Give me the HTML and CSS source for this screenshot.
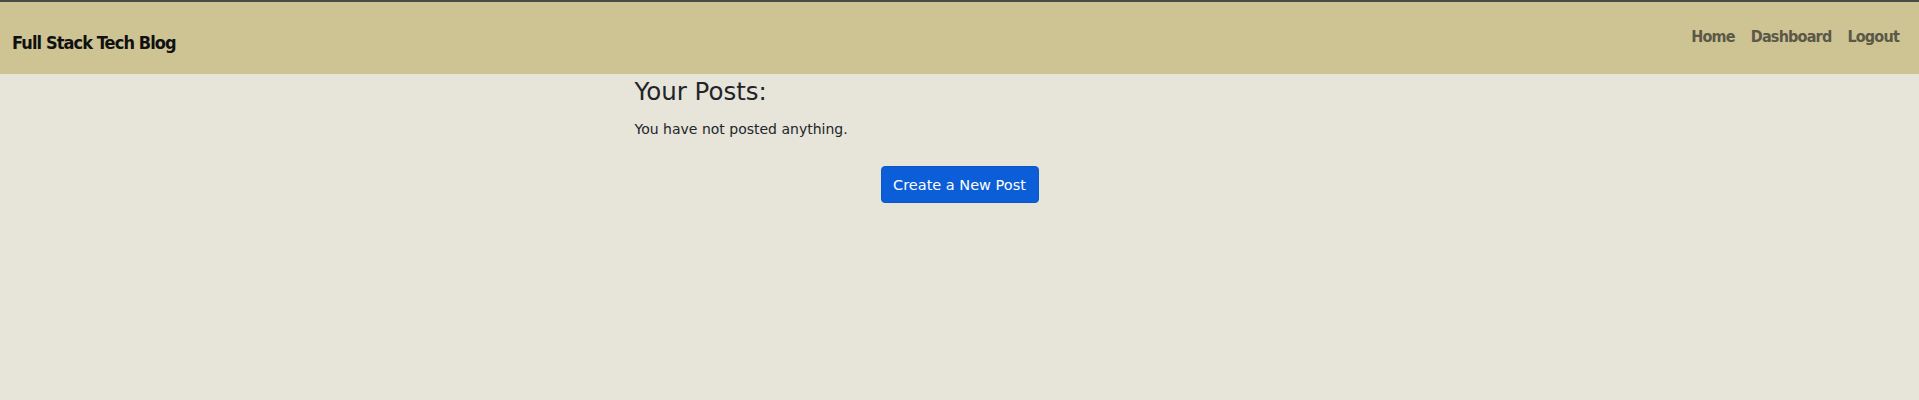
FILE: index.html
```html
<!DOCTYPE html>
<html>
<head>
<meta charset="utf-8">
<link rel="stylesheet" href="styles.css">
</head>
<body>
<header class="site-header">
  <h1 class="brand">Full Stack Tech Blog</h1>
  <nav class="nav">
    <a class="nav-link" href="#">Home</a>
    <a class="nav-link" href="#">Dashboard</a>
    <a class="nav-link" href="#">Logout</a>
  </nav>
</header>
<main class="main">
  <h2 class="title">Your Posts:</h2>
  <p class="empty">You have not posted anything.</p>
  <div class="actions">
    <button class="btn">Create a New Post</button>
  </div>
</main>
</body>
</html>
```
FILE: styles.css
```css
html, body {
  margin: 0;
  padding: 0;
}
body {
  background: #e7e4d9;
  font-family: "DejaVu Sans", "Open Sans", sans-serif;
  color: #212529;
  height: 400px;
}
.site-header {
  border-top: 2px solid #4a4a48;
  background: #cdc393;
  height: 72px;
  display: flex;
  align-items: center;
  justify-content: space-between;
  padding: 0 20px 0 12px;
}
.brand {
  margin: 8px 0 0 0;
  font-family: "DejaVu Sans", sans-serif;
  font-stretch: condensed;
  font-weight: bold;
  font-size: 18px;
  color: #111;
  letter-spacing: -0.9px;
}
.nav {
  display: flex;
  gap: 16px;
  margin-top: -4px;
}
.nav-link {
  font-family: "DejaVu Sans", sans-serif;
  font-stretch: condensed;
  font-weight: bold;
  font-size: 16px;
  letter-spacing: -0.8px;
  color: #5b5847;
  text-decoration: none;
}
.main {
  width: 650px;
  margin: 0 auto;
}
.title {
  font-family: "DejaVu Sans", sans-serif;
  font-weight: normal;
  font-size: 24.5px;
  margin: 2px 0 0 0;
  line-height: 32px;
  color: #212529;
}
.empty {
  font-size: 14px;
  margin: 11px 0 0 0;
  line-height: 20px;
}
.actions {
  display: flex;
  justify-content: center;
  margin-top: 27px;
}
.btn {
  background: #0b5ed7;
  color: #fff;
  border: 1px solid #0a58ca;
  border-radius: 4px;
  width: 158px;
  height: 37px;
  font-family: "DejaVu Sans", sans-serif;
  font-size: 14.5px;
  padding: 0;
}
```
